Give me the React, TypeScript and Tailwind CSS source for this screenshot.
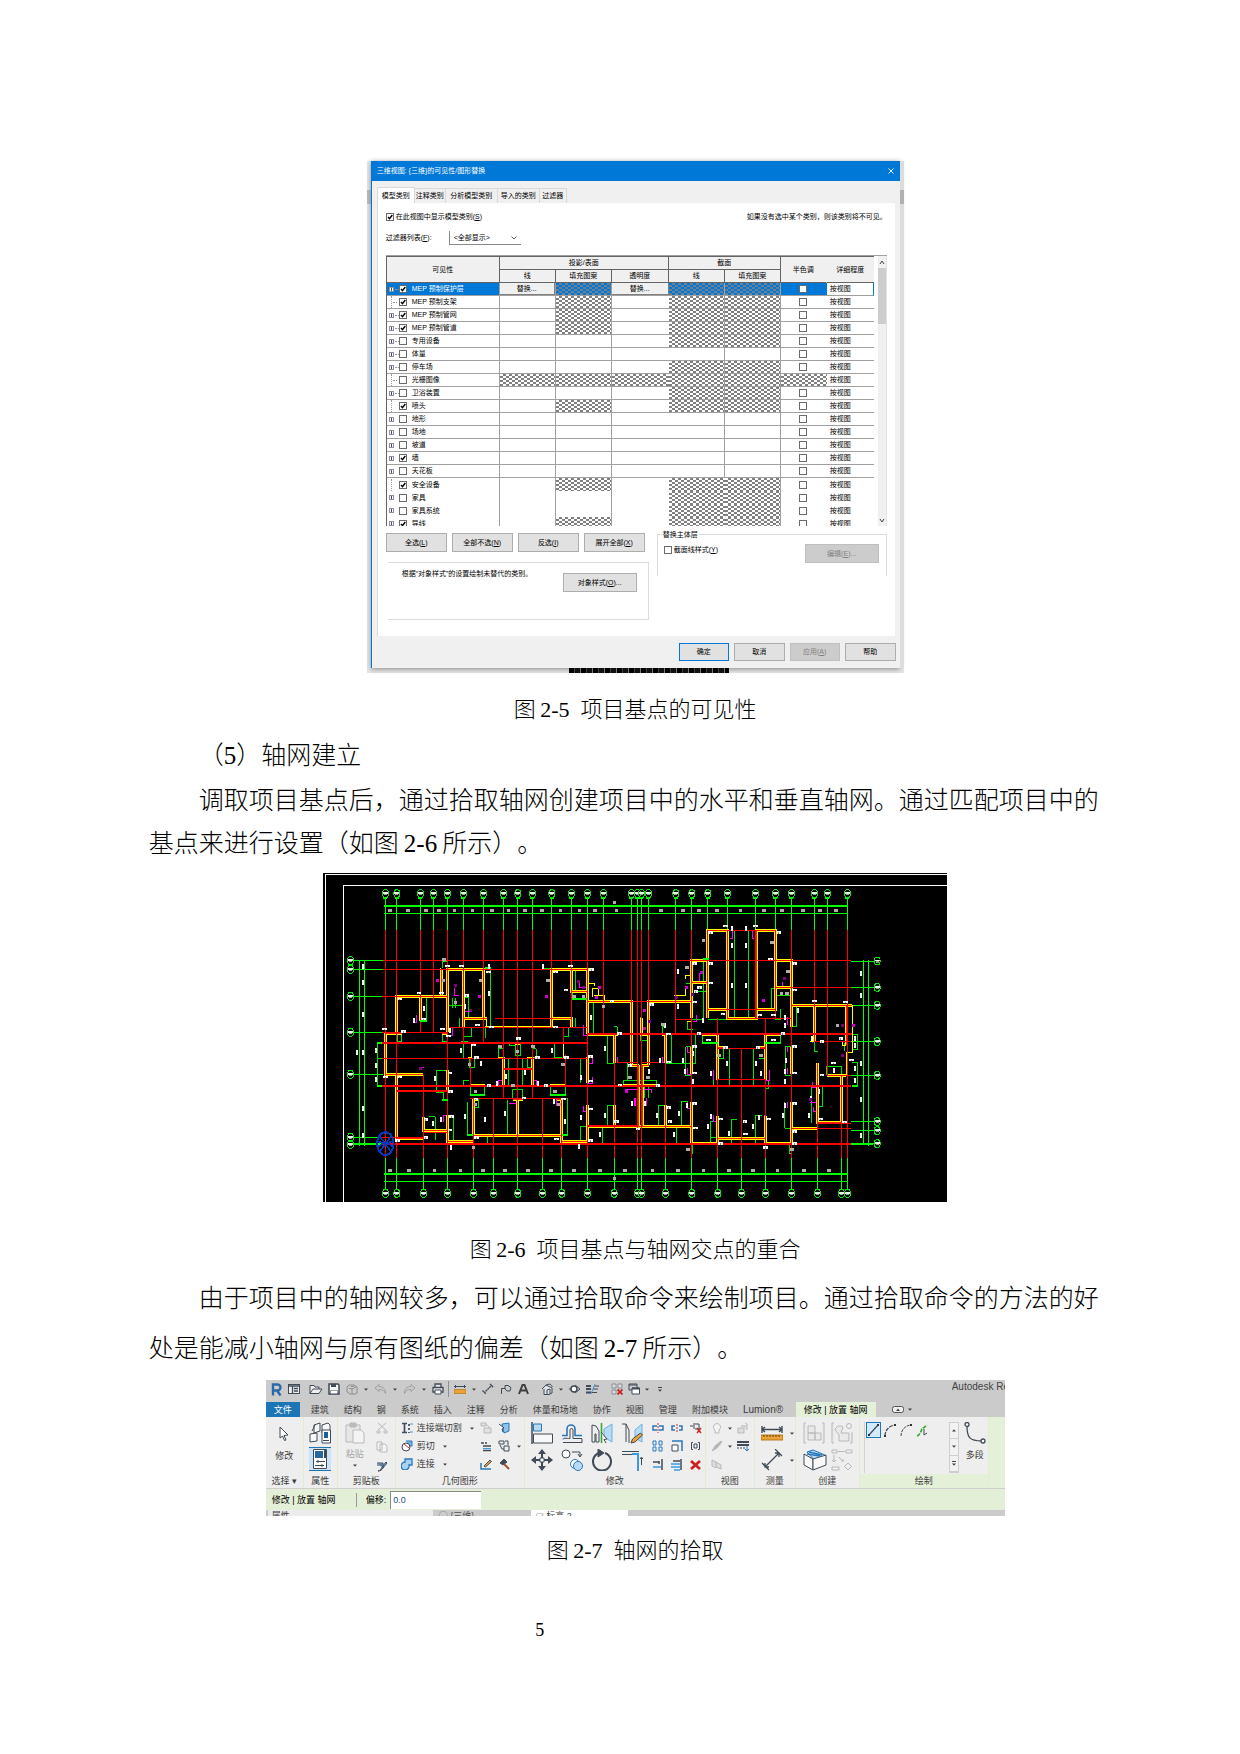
import React from "react";

const UI = "font-['Liberation_Sans','Noto_Sans_CJK_SC',sans-serif]";
const HATCH =
  "bg-[conic-gradient(#808080_25%,#ffffff_0_50%,#808080_0_75%,#ffffff_0)] bg-[length:6px_4px]";
const HATCH_SELECTED =
  "bg-[conic-gradient(#6d7f90_25%,#0078d7_0_50%,#6d7f90_0_75%,#0078d7_0)] bg-[length:6px_4px]";

/* ---------------- Visibility dialog ---------------- */

type Category = {
  name: string;
  checked?: boolean;
  leaf?: boolean;
  proj?: boolean;
  cut?: boolean;
  all?: boolean;
};

const categories: Category[] = [
  { name: "MEP 预制保护层", checked: true, proj: true, cut: true },
  { name: "MEP 预制支架", checked: true, leaf: true, proj: true, cut: true },
  { name: "MEP 预制管网", checked: true, proj: true, cut: true },
  { name: "MEP 预制管道", checked: true, proj: true, cut: true },
  { name: "专用设备", cut: true },
  { name: "体量" },
  { name: "停车场", cut: true },
  { name: "光栅图像", leaf: true, proj: true, cut: true, all: true },
  { name: "卫浴装置", cut: true },
  { name: "喷头", checked: true, leaf: true, proj: true, cut: true },
  { name: "地形" },
  { name: "场地" },
  { name: "坡道" },
  { name: "墙", checked: true },
  { name: "天花板" },
  { name: "安全设备", checked: true, leaf: true, proj: true, cut: true },
  { name: "家具", cut: true },
  { name: "家具系统", cut: true },
  { name: "导线", checked: true, proj: true, cut: true },
];

function Tick({ checked, label, className = "" }: { checked?: boolean; label: string; className?: string }) {
  return (
    <span className={`relative inline-flex size-2 shrink-0 ${className}`}>
      <input
        type="checkbox"
        defaultChecked={checked}
        aria-label={label}
        className="peer size-2 appearance-none border border-[#6b6b6b] bg-white"
      />
      <svg viewBox="0 0 8 8" className="pointer-events-none absolute inset-0 hidden size-2 peer-checked:block">
        <path d="M2 4l1.5 1.7L6.3 2" fill="none" stroke="#000" strokeWidth="1.4" />
      </svg>
    </span>
  );
}

function CategoryRow({ c, i }: { c: Category; i: number }) {
  const sel = i === 0;
  const line = i < 15 ? "border-b border-b-[#a0a0a0]" : "";
  const right = "border-r border-r-[#a0a0a0]";
  const hatch = sel ? HATCH_SELECTED : HATCH;
  const replace = (
    <button className="block h-3 w-full border-r border-b border-[#808080] bg-[#f0f0f0] text-center leading-[11px] text-black">
      替换...
    </button>
  );
  return (
    <tr className="h-[13px]">
      <td className={`${line} ${right} p-0 ${sel ? "bg-[#0078d7] text-white" : ""}`}>
        <div className="flex h-3 items-center pl-[2px] whitespace-nowrap">
          <span className="flex w-[10px] items-center">
            {c.leaf ? (
              <span className="ml-[2px] h-3 border-l border-dotted border-[#999]" />
            ) : (
              <span className="flex size-[5px] items-center justify-center border border-[#919191] bg-white">
                <span className="h-[3px] w-px bg-[#33518f]" />
              </span>
            )}
            {i < 9 && <span className="ml-px w-1 border-t border-dotted border-[#999]" />}
          </span>
          <Tick checked={c.checked} label={c.name} />
          <span className="ml-[5px] leading-3">{c.name}</span>
        </div>
      </td>
      <td className={`${line} ${right} p-0 ${c.all ? hatch : ""}`}>{sel && replace}</td>
      <td className={`${line} ${right} p-0 ${c.proj ? hatch : ""}`} />
      <td className={`${line} p-0 ${c.all ? hatch : ""}`}>{sel && replace}</td>
      <td className={`${line} p-0 ${c.cut ? hatch : ""} ${i < 15 ? right : ""}`} />
      <td className={`${line} ${right} p-0 ${c.cut ? hatch : ""}`} />
      <td className={`${line} p-0 ${sel ? "bg-[#0078d7]" : ""} ${c.all ? hatch : ""}`}>
        {!c.all && (
          <div className="flex h-3 items-center justify-center pr-[2px]">
            <Tick label={`${c.name} 半色调`} />
          </div>
        )}
      </td>
      <td className={`${line} p-0 pl-[3px] leading-3 ${sel ? "border-r border-r-[#0078d7]" : ""}`}>按视图</td>
    </tr>
  );
}

const PLAIN = "border-[#adadad] bg-[#e1e1e1]";
const DEFAULT = "border-[#0078d7] bg-[#e1e1e1]";
const DISABLED = "border-[#bfbfbf] bg-[#cccccc] text-[#838383]";

function DialogButton({
  children,
  tone = PLAIN,
  className = "",
}: {
  children: React.ReactNode;
  tone?: string;
  className?: string;
}) {
  return <button className={`border text-center whitespace-nowrap ${tone} ${className}`}>{children}</button>;
}

function Dialog() {
  const head = "border-r border-b border-[#646464] bg-[#f0f0f0] p-0 text-center font-normal leading-3";
  return (
    <div className={`w-full max-w-[537px] ${UI} text-[7px] leading-3 text-black`}>
      <div className="flex bg-[#f2f2f2]">
        <div className="w-1 bg-[#e9e9e9] pt-[29px]">
          <div className="h-[14px] bg-[#bdbdbd]" />
        </div>
        <div className="min-w-0 flex-1 border-l border-[#0078d7] bg-[#f0f0f0] shadow-[0_1px_5px_#888]">
          <div className="flex h-5 items-center justify-between bg-[#0078d7] pr-[6px] pl-[5px] text-white">
            <span>三维视图: {"{三维}"}的可见性/图形替换</span>
            <button aria-label="关闭">
              <svg viewBox="0 0 6 6" className="size-[6px]">
                <path d="M.5.5l5 5M5.500.5l-5 5" stroke="#fff" strokeWidth=".9" />
              </svg>
            </button>
          </div>
          <div className="px-[5px] pt-[6px]">
            <div className="flex h-4 items-end" role="tablist">
              <button role="tab" className="h-4 w-[38px] border-x border-t border-[#d9d9d9] bg-white whitespace-nowrap">
                模型类别
              </button>
              {[
                ["注释类别", "w-[31px]"],
                ["分析模型类别", "w-[52px]"],
                ["导入的类别", "w-[42px]"],
                ["过滤器", "w-[27px]"],
              ].map(([t, w]) => (
                <button
                  key={t}
                  role="tab"
                  className={`h-[15px] border-t border-r border-[#d9d9d9] bg-[#f0f0f0] whitespace-nowrap ${w}`}
                >
                  {t}
                </button>
              ))}
            </div>
            <div className="h-[433px] border-l border-[#dcdcdc] bg-white pt-2 pr-2 pl-2">
              <div className="flex items-center justify-between">
                <label className="flex items-center gap-[2px]">
                  <Tick checked label="在此视图中显示模型类别" />
                  <span>
                    在此视图中显示模型类别(<u>S</u>)
                  </span>
                </label>
                <span>如果没有选中某个类别，则该类别将不可见。</span>
              </div>
              <div className="mt-[7px] flex h-4 items-center">
                <label htmlFor="filter" className="w-[63px]">
                  过滤器列表(<u>F</u>):
                </label>
                <div className="relative w-[72px]">
                  <select
                    id="filter"
                    className="block h-[14px] w-full appearance-none border-b border-l border-[#8a8a8a] bg-white pl-1"
                  >
                    <option>&lt;全部显示&gt;</option>
                  </select>
                  <svg viewBox="0 0 6 4" className="pointer-events-none absolute top-[5px] right-1 h-1 w-[6px]">
                    <path d="M.5.5L3 3 5.500.5" fill="none" stroke="#333" strokeWidth=".8" />
                  </svg>
                </div>
              </div>
              <div className="mt-[9px] flex h-[271px] overflow-hidden border-t border-[#a0a0a0]">
                <div className="min-w-0 flex-1">
                  <table className="w-full table-fixed border-separate border-spacing-0 border-t border-l border-[#646464]">
                    <colgroup>
                      <col className="w-[113px]" />
                      <col className="w-[56px]" />
                      <col className="w-[56px]" />
                      <col className="w-[57px]" />
                      <col className="w-[56px]" />
                      <col className="w-[56px]" />
                      <col className="w-[46px]" />
                      <col />
                    </colgroup>
                    <thead>
                      <tr className="h-[13px]">
                        <th rowSpan={2} className={head}>可见性</th>
                        <th colSpan={3} className={head}>投影/表面</th>
                        <th colSpan={2} className={head}>截面</th>
                        <th rowSpan={2} className={`${head} border-r-[#f0f0f0]`}>半色调</th>
                        <th rowSpan={2} className={`${head} border-r-0`}>详细程度</th>
                      </tr>
                      <tr className="h-[13px]">
                        <th className={head}>线</th>
                        <th className={head}>填充图案</th>
                        <th className={head}>透明度</th>
                        <th className={head}>线</th>
                        <th className={head}>填充图案</th>
                      </tr>
                    </thead>
                    <tbody>
                      {categories.map((c, i) => (
                        <CategoryRow key={c.name} c={c} i={i} />
                      ))}
                    </tbody>
                  </table>
                </div>
                <div className="ml-1 flex w-[9px] flex-col items-center justify-between border-r border-[#e3e3e3] bg-[#f0f0f0]">
                  <svg viewBox="0 0 8 12" className="h-3 w-2">
                    <path d="M2 8l2-3 2 3" fill="none" stroke="#444" />
                  </svg>
                  <div className="mb-auto h-14 w-2 bg-[#cdcdcd]" />
                  <svg viewBox="0 0 8 10" className="h-[10px] w-2">
                    <path d="M2 3l2 3 2-3" fill="none" stroke="#444" />
                  </svg>
                </div>
              </div>
              <div className="mt-[7px] flex">
                <div className="w-[263px]">
                  <div className="flex gap-[5px]">
                    <DialogButton className="h-[19px] w-[61px]">全选(<u>L</u>)</DialogButton>
                    <DialogButton className="h-[19px] w-[61px]">全部不选(<u>N</u>)</DialogButton>
                    <DialogButton className="h-[19px] w-[61px]">反选(<u>I</u>)</DialogButton>
                    <DialogButton className="h-[19px] w-[61px]">展开全部(<u>X</u>)</DialogButton>
                  </div>
                  <div className="mt-[10px] ml-[2px] flex h-[58px] justify-between border-y border-r border-[#dcdcdc] pt-[5px] pr-[11px] pl-[14px]">
                    <span>根据“对象样式”的设置绘制未替代的类别。</span>
                    <DialogButton className="mt-[5px] h-[19px] w-[74px]">对象样式(<u>O</u>)...</DialogButton>
                  </div>
                </div>
                <fieldset className="relative mt-px ml-2 h-[42px] min-w-0 flex-1 border-x border-t border-[#dcdcdc]">
                  <legend className="ml-1 h-0 px-px leading-[0px]">替换主体层</legend>
                  <div className="flex justify-between pt-[9px] pr-[7px] pl-[6px]">
                    <label className="flex h-3 items-center gap-[2px]">
                      <Tick label="截面线样式" />
                      <span>
                        截面线样式(<u>Y</u>)
                      </span>
                    </label>
                    <DialogButton tone={DISABLED} className="h-[19px] w-[74px]">
                      编辑(<u>E</u>)...
                    </DialogButton>
                  </div>
                </fieldset>
              </div>
            </div>
          </div>
          <div className="flex h-8 justify-end gap-[5px] pt-[7px] pr-1">
            <DialogButton tone={DEFAULT} className="h-[18px] w-[50px]">确定</DialogButton>
            <DialogButton className="h-[18px] w-[51px]">取消</DialogButton>
            <DialogButton tone={DISABLED} className="h-[18px] w-[50px]">
              应用(<u>A</u>)
            </DialogButton>
            <DialogButton className="h-[18px] w-[51px]">帮助</DialogButton>
          </div>
        </div>
        <div className="w-1 bg-[#dcdcdc] pt-[29px]">
          <div className="h-[14px] bg-[#b0b0b0]" />
        </div>
      </div>
      <div className="flex h-[5px] justify-center bg-[#e6e6e6] pl-[28px]">
        <div className="w-[160px] bg-[repeating-linear-gradient(90deg,#000_0_5px,#444_5px_6px,#111_6px_11px,#777_11px_12px)]" />
      </div>
    </div>
  );
}

/* ---------------- Floor plan ---------------- */

const topAxes: [number, number][] = [
  [196, 880], [230, 880], [301, 502], [340, 502], [382, 880], [430, 530], [490, 530], [550, 700],
  [593, 880], [637, 700], [695, 490], [754, 490], [802, 880], [850, 505], [934, 600], [952, 880],
  [964, 880], [985, 600], [1067, 505], [1115, 880], [1163, 460], [1222, 460], [1306, 460], [1366, 460],
  [1414, 880], [1483, 530], [1522, 630], [1582, 880],
];
const bottomAxes: [number, number][] = [
  [196, 836], [230, 836], [310, 630], [382, 836], [460, 700], [520, 700], [593, 836], [667, 700],
  [725, 700], [802, 836], [882, 507], [952, 836], [964, 836], [1036, 507], [1115, 836], [1193, 460],
  [1264, 550], [1336, 460], [1414, 836], [1492, 600], [1564, 630], [1582, 836],
];
const leftAxes = [287, 313, 394, 502, 628, 817, 838];
const rightAxes = [288, 367, 421, 530, 631, 770, 797, 836];

const WALLS =
  "M230 504V394H382M301 394V468M196 504H245M196 504V628H310M230 628V820H310M310 755V796H382M382 750V830H460" +
  "M382 502V312H490V462M430 312V487M430 460H500M364 312V390M365 504H382M382 615V682M460 810V702H475M460 810H725V702H712M725 810V830H802" +
  "M593 700V810M580 702H608M695 487V312H802V507M754 312V380H802M695 460H754V487M802 409H934V600H958M802 507H893M802 575V655" +
  "M802 720V830M802 783H1115M882 507V595M882 720V780M955 600V783M966 600V783M985 600V409H1115M1115 460V286H1163M910 662H1008" +
  "M450 662H495M690 662H735M550 577V660M637 577V660M585 534H600M963 460V507H985M966 600H988M1025 507H1036V595M1036 720V780" +
  "M1115 352H1163M1163 460V196H1222V460H1308V196H1366V433H1306M1163 433H1222M1366 286H1414V485M1366 367H1414M1366 196V433" +
  "M1414 422H1596M1483 422V530M1578 422V540M1147 507H1193V645M1193 548H1210M1336 645V507H1382M1320 548H1336M1115 545V628" +
  "M1414 545V628M1115 710V836H1193V752M1193 819H1336M1336 752V836H1414V790H1492M1414 710V790M1492 595V772H1564V630M1520 630H1578";

const THIN_YELLOW =
  "M495 484H690M498 460V484M690 460V484M455 530V578H445M729 530V578H740M550 577H535M637 577H622M1596 420V562H1578V630M802 355H823V364" +
  "M823 391H853V409M818 397V370H835V391M1115 332H1097V341M1062 391H1096V370M360 310V385M1100 470H1115M1470 530H1495M1568 530V540H1578";

const RED_THICK = "M187 534H802M802 507H1595M187 662H1593M187 836H1593M230 677H382M550 611H637M802 783H952";
const RED_THIN =
  "M190 286H1593M190 313H805M187 394H385M187 502H382M187 580H802M450 700H742M187 817H310M310 801H382M525 460H700M390 487H802" +
  "M802 409H1115M890 592H952M964 592H1020M1366 367H1593M1414 421H1593M1483 529H1593M1522 631H1593M1492 775H1593M1414 790H1593" +
  "M1193 550H1336M1193 643H1336M1163 433H1366M1067 463H1115M1222 460H1415M1222 196H1306M451 578V660M736 570V660M730 488V535M310 630V660";

const GREEN =
  "M366 310V288H382V310M512 310V485M320 394V468H301M382 355V421H430M397 400V428M406 400V428M430 397H445V460M418 460V487H430M430 487V514H455V487" +
  "M495 487V520M745 487V514H733M766 460V487M672 310H690V320M766 316V380M757 380V403H800M820 415V505M850 409V433M862 507V595H882M892 485V510M883 485H892" +
  "M232 508V528H245V508M367 508V528H382M187 534H173V662H187M173 580H187M349 615V682H370V705H385M349 615H382M400 750V836M346 755V825M328 755H346" +
  "M430 530V578M424 530H445M430 662V645H448M449 580V607H463V580M702 530V578H725M535 551V577M535 551H550M649 551V577H637M649 551H637M586 534V570H600V534" +
  "M568 530V542H586M565 580V660M607 580V660M622 580V607H637M452 665V690H494V665M690 665V690H737V665M578 700V672H608V700M442 710V810H460M475 702V728H460" +
  "M562 705V810M743 700V810H725M725 700H743M502 810V835M781 783H802M781 655V580H802M862 780V720H882M847 783V838M923 592V645M910 662V645H952M781 783V840" +
  "M1151 286V463H1115M1097 355H1115M1123 380H1163M1151 365V380M1243 196V460M1285 196V460M1225 196H1243M1285 196H1303M1353 430V370H1366M1366 380V391H1414" +
  "M1220 430V463H1165M1430 485V420M1414 485H1430M1380 433V463H1366M1125 507V595H1036M1054 507V595M1028 507V485H1036M1147 510V534H1193M1336 534H1382V510" +
  "M1097 545V630H1115M1097 545H1115M1396 545V630H1414M1396 545H1414M1228 550V665M1300 550V665M1210 548V580H1193M1318 580H1336M1336 645V670H1345V645" +
  "M1180 645V665H1195M1016 780V720H1036M1084 780V710H1105M1069 780V838M1171 836V770H1193M1171 817H1193M1234 836V763H1252M1306 836V752H1325M1394 710V790" +
  "M1394 790H1414M1475 775V665H1508V723H1492M1520 630V604H1565V630M1597 507H1613V552H1597M1597 592H1613V662H1595M1484 530V558H1495M1574 535V558" +
  "M1118 838V865H1112M1408 840V865H1417M961 457V525H985M985 645H1008V662M946 645H985M985 662V700M973 665V700M1102 470V492H1118";

const GREEN_THICK =
  "M193 123H1582M193 927H1582M495 310H512M450 690H494M690 690H737M1147 534H1193M1336 534H1382M100 836H187M1593 836H1660M365 705H385M172 534H187M172 662H187M1597 662H1613M755 403H800M440 810H460M725 810H743M300 468H320M1150 282H1167";

const MAGENTA =
  "M403 370V391H418M430 391V460M430 440H452M382 355V380M290 450V472H280M397 487V510H385M300 608H312M778 345V367H790M778 367H802M790 480V510H802M817 575V595H805" +
  "M817 635V655H805M535 660V645H545M649 660V645H640M568 716H590M370 770V750H380M709 700V722M790 722V738H802M892 575V595M946 700V723M916 680V672H955" +
  "M1138 325V353M1123 353H1150M1237 196V220H1230M1297 196V220H1303M1388 350V367H1366M1366 370V432M1130 450V468H1118M1403 455V480M1028 575V592H1036" +
  "M1477 515V535M1103 545V562H1115M1103 610V628H1115M1180 615V645M1348 615V645H1336M1403 545V562M1403 610V628M1103 710V730H1115M1181 750V770H1193" +
  "M1333 750V770M1403 710V730M1490 668V712H1470M1478 650V668H1490M1480 725V740H1492M935 672H995V685M942 700V722M978 700V722M963 672V700";

/* Small annotation labels: wide ones carry text, tall ones are rotated dimensions. */
const wideLabels: [number, number][] = [
  [297, 385], [365, 385], [240, 403], [193, 493], [250, 500], [367, 493], [382, 303], [424, 303], [505, 322], [439, 392],
  [310, 462], [385, 513], [472, 481], [515, 487], [460, 540], [470, 578], [652, 578], [595, 521], [738, 376], [706, 322],
  [752, 303], [814, 314], [706, 487], [898, 506], [740, 578], [197, 637], [240, 637], [390, 625], [392, 680], [318, 764],
  [318, 818], [232, 827], [390, 796], [395, 755], [468, 702], [612, 700], [710, 823], [470, 818], [812, 827], [812, 575],
  [507, 662], [678, 662], [900, 661], [890, 770], [812, 732], [876, 408], [930, 602], [954, 792], [730, 702], [812, 648],
  [1216, 184], [1306, 184], [1172, 203], [1377, 203], [1124, 296], [1172, 296], [1351, 282], [1424, 296], [1172, 354],
  [1424, 376], [1124, 412], [995, 419], [1484, 408], [1576, 412], [1137, 506], [1389, 506], [1217, 548], [1314, 548],
  [1045, 508], [1045, 592], [1563, 521], [1506, 530], [1506, 631], [1540, 594], [1166, 525], [1360, 525], [1124, 545],
  [1424, 545], [1124, 625], [1424, 625], [1014, 662], [1045, 728], [1050, 770], [1124, 716], [1424, 716], [1126, 790],
  [1202, 762], [1346, 762], [1275, 770], [1277, 808], [1202, 836], [1336, 848], [1424, 836], [1424, 800], [1502, 763],
  [1573, 772], [1595, 586], [1361, 451], [1318, 451], [1209, 447], [1138, 368], [1128, 380],
];
const tallLabels: [number, number][] = [
  [129, 303], [129, 353], [129, 447], [112, 562], [129, 562], [129, 730], [129, 810], [168, 556], [168, 601], [168, 644],
  [313, 430], [506, 385], [508, 303], [669, 303], [282, 465], [390, 497], [435, 423], [813, 457], [856, 550], [424, 556],
  [697, 556], [484, 596], [559, 634], [614, 622], [346, 640], [338, 776], [364, 764], [393, 846], [436, 755], [496, 764],
  [556, 746], [736, 770], [784, 757], [784, 637], [856, 750], [840, 808], [776, 845], [530, 656], [655, 656], [702, 710],
  [1236, 241], [1277, 241], [1236, 361], [1277, 361], [1236, 190], [1277, 190], [1074, 319], [1074, 425], [1149, 465],
  [1434, 437], [1395, 457], [1395, 480], [1118, 565], [1090, 586], [1096, 620], [1118, 650], [1221, 595], [1309, 595],
  [1397, 586], [1396, 620], [1396, 648], [1173, 625], [1322, 625], [1497, 680], [1467, 750], [1474, 700], [1605, 520],
  [1605, 541], [1605, 610], [1605, 645], [1623, 325], [1623, 391], [1623, 595], [1623, 703], [1623, 811], [1011, 750],
  [1078, 746], [1062, 808], [1165, 785], [1228, 805], [1299, 785], [1388, 750], [1395, 720], [1173, 755], [1316, 757],
  [1477, 520], [1541, 615], [1035, 480], [986, 620], [1019, 585], [936, 715], [975, 715], [1101, 720],
];
const grayLabels: [number, number][] = [
  [210, 136], [264, 136], [318, 136], [357, 136], [403, 136], [457, 136], [516, 136], [565, 136], [615, 136], [665, 136],
  [721, 136], [778, 136], [824, 136], [889, 136], [1023, 136], [1089, 136], [1137, 136], [1191, 136], [1261, 136], [1332, 136],
  [1386, 136], [1449, 136], [1500, 136], [1548, 136], [883, 112], [883, 940], [210, 916], [267, 916], [343, 916], [421, 916],
  [489, 916], [555, 916], [624, 916], [693, 916], [762, 916], [840, 916], [915, 916], [997, 916], [1074, 916], [1150, 916],
  [1227, 916], [1299, 916], [1372, 916], [1452, 916], [1527, 916], [372, 282], [370, 346], [406, 412], [481, 346], [684, 346],
  [762, 395], [790, 395], [850, 424], [592, 560], [540, 545], [638, 545], [448, 598], [728, 598], [466, 680], [704, 680],
  [578, 662], [460, 848], [466, 718], [716, 718], [1028, 478], [1150, 225], [1356, 232], [1100, 308], [1404, 320],
  [1384, 386], [1400, 386], [1552, 480], [930, 636], [984, 636], [1196, 572], [1322, 572], [1104, 854], [1416, 854],
];
const purpleMarks: [number, number][] = [
  [351, 346], [407, 362], [478, 393], [451, 436], [680, 395], [775, 349], [838, 368], [790, 368], [828, 397], [302, 610],
  [1144, 321], [1393, 339], [1330, 405], [1567, 481], [1600, 481], [1567, 571], [972, 437], [989, 470], [972, 490],
  [1470, 702], [920, 680], [1117, 388], [1098, 366], [1070, 397],
];

function Bubble({ x, y }: { x: number; y: number }) {
  return (
    <g>
      <ellipse cx={x + 0.5} cy={y} rx="9" ry="12" stroke="#00ee00" strokeWidth="3" />
      <rect x={x - 7} y={y - 4} width="15" height="5" fill="#f0f0f0" />
      <rect x={x - 4} y={y + 1} width="9" height="4" fill="#9a9a9a" />
    </g>
  );
}

function FloorPlan() {
  return (
    <svg
      viewBox="9 24 1872 987"
      role="img"
      aria-label="项目轴网平面图"
      className="block w-full max-w-[624px] bg-black"
      shapeRendering="crispEdges"
      fill="none"
    >
      <path d="M1881 28H17V1011M1881 62H71V1011" stroke="#fff" strokeWidth="3" />
      <g stroke="#00ff00" strokeWidth="3">
        {topAxes.map(([x]) => (
          <path key={x} d={`M${x} 98V195`} />
        ))}
        {bottomAxes.map(([x]) => (
          <path key={x} d={`M${x} 880V974`} />
        ))}
        {leftAxes.map((y) => (
          <path key={y} d={`M100 ${y}H190`} />
        ))}
        {rightAxes.map((y) => (
          <path key={y} d={`M1593 ${y}H1663`} />
        ))}
        <path d="M118 286V842M133 286V842M1630 286V840M1645 286V842M193 145H1582M193 949H1582" />
      </g>
      <path d={GREEN} stroke="#00e400" strokeWidth="3" />
      <path d={MAGENTA} stroke="#ff00ff" strokeWidth="3" />
      <path d={THIN_YELLOW} stroke="#ffff00" strokeWidth="3" />
      <path d={WALLS} stroke="#ffff00" strokeWidth="9" />
      <path d={WALLS} stroke="#ff2000" strokeWidth="3" />
      <g stroke="#ff0000" strokeWidth="3">
        {topAxes.map(([x, end]) => (
          <path key={x} d={`M${x} 195V${end}`} />
        ))}
        {bottomAxes.map(([x, start]) => (
          <path key={x} d={`M${x} ${start}V880`} />
        ))}
        <path d={RED_THIN} />
      </g>
      <path d={RED_THICK} stroke="#ff0000" strokeWidth="6" />
      <path d={GREEN_THICK} stroke="#00ff00" strokeWidth="6" />
      {wideLabels.map(([x, y], i) => (
        <g key={i}>
          <rect x={x - 7} y={y - 4} width="14" height="7" fill="#fff" />
          <rect x={x - 2} y={y - 1} width="3" height="4" fill="#888" />
        </g>
      ))}
      {tallLabels.map(([x, y], i) => (
        <g key={i}>
          <rect x={x - 3} y={y - 7} width="6" height="15" fill="#fff" />
          <rect x={x - 3} y={y - 1} width="3" height="3" fill="#ccc" />
        </g>
      ))}
      {grayLabels.map(([x, y], i) => (
        <rect key={i} x={x - 5} y={y - 4} width="11" height="9" fill="#b0aea4" />
      ))}
      {purpleMarks.map(([x, y], i) => (
        <rect key={i} x={x - 4} y={y - 4} width="9" height="9" fill={i % 2 ? "#800080" : "#d000d0"} />
      ))}
      {topAxes.map(([x]) => (
        <g key={x}>
          <rect x={x - 6} y="96" width="12" height="6" fill="#00ff00" />
          <Bubble x={x} y={86} />
        </g>
      ))}
      {bottomAxes.map(([x]) => (
        <Bubble key={x} x={x} y={985} />
      ))}
      {leftAxes.map((y) => (
        <Bubble key={y} x={91} y={y} />
      ))}
      {rightAxes.map((y) => (
        <Bubble key={y} x={1671} y={y} />
      ))}
      <g stroke="#0038c0" strokeWidth="6">
        <ellipse cx="196" cy="836" rx="25" ry="34" />
        <path d="M178 812L214 862M214 812L178 862M172 828L190 834L172 846M220 828L202 834L220 846" strokeWidth="5" />
      </g>
    </svg>
  );
}

/* ---------------- Ribbon ---------------- */

function Ico({
  label,
  w = 12,
  h = 12,
  className = "h-3 w-3",
  children,
}: {
  label: string;
  w?: number;
  h?: number;
  className?: string;
  children: React.ReactNode;
}) {
  return (
    <button aria-label={label} className="block shrink-0">
      <svg viewBox={`0 0 ${w} ${h}`} className={`block ${className}`} fill="none" stroke="#414b57">
        {children}
      </svg>
    </button>
  );
}

function Caret({ className = "" }: { className?: string }) {
  return (
    <svg viewBox="0 0 4 3" className={`h-[3px] w-1 shrink-0 ${className}`}>
      <path d="M0 .5h4L2 2.800z" fill="#444" />
    </svg>
  );
}

const L = "h-[22px] w-[22px]";

function QuickAccess() {
  return (
    <div className="mb-1 flex h-[18px] items-center pl-[5px]">
      <Ico label="Revit" className="h-[13px] w-[11px]" w={11} h={13}>
        <path d="M2 12.500V1.500h4.500a3 3 0 010 6H3M6 7.500l3.500 5" stroke="#2b6aa8" strokeWidth="2.400" />
      </Ico>
      <div className="ml-[6px]">
        <Ico label="主页">
          <rect x=".5" y="1.500" width="11" height="9" fill="#eee" />
          <path d="M.5 3h11M4.500 3v7.500M6 5.500h4M6 8h4" strokeWidth="1.300" />
        </Ico>
      </div>
      <div className="ml-[9px]">
        <Ico label="打开" w={14} className="h-3 w-[14px]">
          <path d="M1 10.500V2.500h4l1 1.500h4v2M1 10.500l3-4.500h9l-3 4.500z" fill="#eee" />
        </Ico>
      </div>
      <div className="ml-[5px]">
        <Ico label="保存">
          <path d="M1 1h9l1 1v9H1z" fill="#f5f5f5" strokeWidth="1.500" />
          <path d="M3 1h5v3H3zM2.500 7h7v4h-7z" fill="#414b57" stroke="none" />
          <path d="M3 7.500h6v3H3z" fill="#fff" stroke="none" />
        </Ico>
      </div>
      <div className="ml-[6px] flex items-center gap-[6px]">
        <Ico label="同步">
          <path d="M3 2h5l3 2v6l-2 1H4L1 9V4zM3 5l3 1 4-2M6 6v5M5 3.500h3" stroke="#8e8e8e" />
        </Ico>
        <Caret />
        <Ico label="放弃" w={13} className="h-3 w-[13px]">
          <path d="M5 1.500L1 5l4 3.500v-2c4 0 5 1 6.500 4 0-4-2-7-6.500-7z" stroke="#a0a0a0" />
        </Ico>
        <Caret />
        <Ico label="重做" w={13} className="h-3 w-[13px]">
          <path d="M8 1.500L12 5 8 8.500v-2c-4 0-5 1-6.500 4 0-4 2-7 6.500-7z" stroke="#a0a0a0" />
        </Ico>
        <Caret />
        <Ico label="打印">
          <path d="M3 4V1h6v3M1 4.500h10V9H1z" fill="#e8e8e8" strokeWidth="1.300" />
          <path d="M3 7h6v4H3z" fill="#fff" />
        </Ico>
      </div>
      <div className="ml-1 h-4 border-l border-[#8e8e8e]" />
      <div className="ml-[5px] flex items-center gap-[6px]">
        <Ico label="测量" >
          <path d="M0 3.500h12M1.500 2v3M10.500 2v3" />
          <path d="M0 6.500h12v4H0z" fill="#eaa13a" stroke="#b06a00" strokeWidth=".6" />
        </Ico>
        <Caret />
        <Ico label="对齐尺寸标注">
          <path d="M2 10L10 2M.5 7.500L4 11M8 1l3.500 3.500" strokeDasharray="2 .5" strokeWidth="1.300" />
        </Ico>
        <Ico label="按类别标记">
          <path d="M1.500 11V5.500H5M5 2.500h3l3 2-1 3.500H7L5 6z" />
        </Ico>
        <Ico label="文字" w={11} className="h-3 w-[11px]">
          <path d="M1 11L4.500 2h2L10 11M3 7.500h5" stroke="#3f3f3f" strokeWidth="2" />
        </Ico>
      </div>
      <div className="ml-3 flex items-center gap-[6px]">
        <Ico label="默认三维视图">
          <path d="M1 6l4-4 6 3v5l-3 1.500H3V6M6 11V7l3-1v5M5 2l4-1 2.500 3" fill="#dfe3e6" />
        </Ico>
        <Caret />
        <Ico label="剖面" w={11} className="h-3 w-[11px]">
          <circle cx="5" cy="6" r="3" fill="#fff" strokeWidth="1.500" />
          <path d="M6 2l5 4-5 4M0 6h2" />
        </Ico>
        <Ico label="细线" w={13} className="h-3 w-[13px]">
          <path d="M0 3h5M0 6h5M0 9.500h5" strokeWidth="2" />
          <path d="M8 3h5M7 6h5M6 9.500h5" />
          <path d="M5 11l4-10" stroke="#3b9ae0" />
        </Ico>
      </div>
      <div className="ml-3 flex items-center gap-[5px]">
        <Ico label="关闭隐藏窗口">
          <path d="M1 1h4v4H1zM7 1h4v4H7zM1 7h4v4H1z" stroke="#8a8f95" fill="#ddd" />
          <path d="M6.500 6.500l5 5M11.500 6.500l-5 5" stroke="#c62828" strokeWidth="1.800" />
        </Ico>
        <Ico label="切换窗口">
          <path d="M1 1h8v6H1zM1 2h8" />
          <path d="M4 5h7.500v6H4z" fill="#fff" />
          <path d="M4 5.500h7.500" strokeWidth="2" />
        </Ico>
        <Caret />
        <span className="ml-1 border-t border-[#444] pt-px">
          <Caret />
        </span>
      </div>
      <span className="ml-auto w-[53px] self-start overflow-hidden text-[10px] leading-[14px] whitespace-nowrap text-[#444]">
        Autodesk Revit
      </span>
    </div>
  );
}

function Panel({
  title,
  className,
  green,
  children,
}: {
  title: string;
  className: string;
  green?: boolean;
  children: React.ReactNode;
}) {
  return (
    <section className={`flex shrink-0 flex-col border-r border-[#e0edd2] ${className}`}>
      <div className="h-[57px] pt-[5px]">{children}</div>
      <h3 className={`h-[14px] text-center leading-[14px] whitespace-nowrap ${green ? "bg-[#e5f0d8]" : ""}`}>{title}</h3>
    </section>
  );
}

function Ribbon() {
  const tabs = ["建筑", "结构", "钢", "系统", "插入", "注释", "分析", "体量和场地", "协作", "视图", "管理", "附加模块", "Lumion®"];
  const gray = "#b9b9b9";
  return (
    <div className={`h-[136px] w-full max-w-[739px] overflow-hidden bg-[#cbcbcb] ${UI} text-[9px] leading-3 text-[#3c3c3c]`}>
      <QuickAccess />
      <nav className="flex h-[15px] items-center whitespace-nowrap">
        <button className="h-[15px] w-[34px] bg-[#1c75b4] text-white">文件</button>
        <div className="ml-[11px] flex gap-[15px]">
          {tabs.map((t) => (
            <button key={t} className={t.startsWith("L") ? "text-[10px]" : ""}>
              {t}
            </button>
          ))}
        </div>
        <button className="ml-auto h-[15px] w-20 bg-[#e5f0d8] text-black">修改 | 放置 轴网</button>
        <button aria-label="最小化" className="mr-[93px] ml-4 flex items-center gap-1">
          <svg viewBox="0 0 12 7" className="h-[7px] w-3" fill="#eee" stroke="#555">
            <rect x=".5" y=".5" width="11" height="6" rx="2" />
            <path d="M4 5l2-2.500L8 5z" fill="#444" stroke="none" />
          </svg>
          <Caret />
        </button>
      </nav>
      <div className="flex h-[71px] bg-[#eeeeee]">
        <Panel title="选择 ▾" className="w-[38px]">
          <button className="mx-auto flex flex-col items-center">
            <svg viewBox="0 0 12 16" className="mt-1 h-4 w-3" fill="#fff" stroke="#414b57">
              <path d="M2 1l8 8-4 .5 2 4.500-1.500.5-2-4.500L2 12z" />
            </svg>
            <span className="mt-2">修改</span>
          </button>
        </Panel>
        <Panel title="属性" className="w-[34px]">
          <div className="flex flex-col items-center gap-[3px]">
            <Ico label="类型属性" w={22} h={22} className={L}>
              <path d="M5 3l6-2v8l-6 2zM13 3l6-2 2 2v6l-8 2zM1 12l7-1v8l-7 1z" fill="#f8f8f8" />
              <path d="M13 8h8.500v13H13z" fill="#fff" />
              <path d="M15 10h4v6h-4z" fill="#1e5f99" stroke="none" />
              <path d="M14 18.500h6M3 9l3-6" />
            </Ico>
            <div className="border-y border-[#1c75b4] bg-[#cbe3f7] px-px">
              <Ico label="属性" w={20} h={22} className="h-[22px] w-5">
                <path d="M3.500 1.500h13v19h-13z" fill="#fff" />
                <path d="M5 3h8v7H5z" fill="#2668a0" stroke="none" />
                <path d="M15 2v8" strokeWidth="2" />
                <path d="M6 13.500h9M8 12v3M5 17.500h9M12 16v3" />
              </Ico>
            </div>
          </div>
        </Panel>
        <Panel title="剪贴板" className="w-[58px]">
          <div className="flex justify-center gap-[11px]">
            <button className="flex flex-col items-center text-[#a8a8a8]">
              <svg viewBox="0 0 20 22" className="h-[22px] w-5" fill="#e6e6e6" stroke={gray}>
                <path d="M1 3h14v17H1z" />
                <path d="M5 1h6v4H5z" fill="#bbb" />
                <path d="M8 8h8l3 3v10H8z" fill="#f4f4f4" />
              </svg>
              <span className="mt-1">粘贴</span>
              <Caret className="mt-1" />
            </button>
            <div className="flex flex-col gap-[7px]">
              <Ico label="剪切">
                <path d="M2 1l8 7M10 1L2 8M1 9h3v2H1zM8 9h3v2H8z" stroke={gray} />
              </Ico>
              <Ico label="复制">
                <path d="M1 1h5v8H1zM4 3h5l2 2v6H4z" fill="#f4f4f4" stroke={gray} />
              </Ico>
              <Ico label="匹配类型">
                <path d="M1 3h6v5M1 5h5M2 11c2 0 3-2 4-4l4-5 1 1-4 5c-1 2-3 3-5 3z" fill="#74b5e8" />
              </Ico>
            </div>
          </div>
        </Panel>
        <Panel title="几何图形" className="w-[129px]">
          <div className="flex gap-1 pl-[5px]">
            <div className="flex w-[75px] flex-col gap-[6px] whitespace-nowrap">
              <div className="flex items-center gap-1">
                <Ico label="连接端切割">
                  <path d="M1 1.500h5M1 10.500h5M3.500 2v8M8 2v2M8 6v2M8 10v1" strokeWidth="1.700" />
                  <path d="M9 2h3M9 10h3" stroke="#3b9ae0" />
                </Ico>
                连接端切割
                <Caret className="ml-1" />
              </div>
              <div className="flex items-center gap-1">
                <Ico label="剪切">
                  <path d="M5 1h6v5H8" fill="#6db4ea" stroke="#2a78b8" />
                  <circle cx="5" cy="7" r="4" fill="#fff" />
                  <path d="M3 4l5 4" stroke="#d03030" />
                </Ico>
                剪切
                <Caret className="ml-1" />
              </div>
              <div className="flex items-center gap-1">
                <Ico label="连接">
                  <path d="M4 1h7v6H8a4 4 0 11-4-3z" fill="#a6d2f3" stroke="#2a78b8" strokeWidth="1.300" />
                </Ico>
                连接
                <Caret className="ml-1" />
              </div>
            </div>
            <div className="grid grid-cols-[12px_13px_4px] items-center gap-x-[6px] gap-y-[6px]">
              <Ico label="应用连接端">
                <path d="M1 1h5v3H1zM4 6h7v5H4zM6 2l4 4" stroke={gray} fill="#e2e2e2" />
              </Ico>
              <Ico label="拆分面">
                <path d="M4 2l7-1v8l-5 2z" fill="#8cc4ee" stroke="#2a78b8" />
                <path d="M1 2l5 4-2 1 1 3" fill="#fff" />
              </Ico>
              <span />
              <Ico label="梁柱连接">
                <path d="M1 3h3M5 3h2M3 6h8M3 10.500h8" strokeWidth="1.600" />
                <path d="M3 8.500h8" stroke="#3b9ae0" />
              </Ico>
              <Ico label="墙连接">
                <path d="M1 4h5V1H1zM6 6h5v5H6zM2 5l2 4h2M7 1h3v4" />
              </Ico>
              <Caret />
              <Ico label="拆除">
                <path d="M1 5v6h10" stroke="#2a78b8" strokeWidth="1.500" />
                <path d="M4 8l6-6 1.500 1.500-6 5.500z" fill="#e8a33d" />
              </Ico>
              <Ico label="锤子">
                <path d="M2 5l4-4 3 3-4 3z" fill="#414b57" />
                <path d="M6 6l5 5" stroke="#a0522d" strokeWidth="2" />
              </Ico>
            </div>
          </div>
        </Panel>
        <Panel title="修改" className="w-[181px]">
          <div className="flex gap-[9px] pl-[6px]">
            <div className="grid grid-cols-4 gap-x-[8px] gap-y-[5px]">
              <Ico label="对齐" w={22} h={22} className={L}>
                <path d="M1 0v22" strokeWidth="1.500" />
                <path d="M2.500 2h8v7h-8z" fill="#b9dcf5" stroke="#2a78b8" />
                <path d="M2.500 12h19v9h-19z" fill="#f8f8f8" />
              </Ico>
              <Ico label="偏移" w={22} h={22} className={L}>
                <path d="M1 13.500h5V7a4 4 0 018 0v6.500h7" stroke="#2a78b8" strokeWidth="1.600" />
                <path d="M2 17.500c0-2 3-1 7-1V8a1.500 1.500 0 013 0v8.500h9M2 20.500h19V17" />
              </Ico>
              <Ico label="镜像 - 拾取轴" w={22} h={22} className={L}>
                <path d="M1 3l4 1 3 5v11H5v-8H4v8H1z" fill="#eee" />
                <path d="M10.500 1v20" stroke="#3aaa35" strokeWidth="1.600" />
                <path d="M21 2l-8 5v8l8 5z" fill="#b9dcf5" stroke="#6eb0e0" />
                <path d="M10 10l6 7-3 .5 2 3.500" fill="#fff" />
              </Ico>
              <Ico label="镜像 - 绘制轴" w={22} h={22} className={L}>
                <path d="M1 2h4l3 6v13M5 2v18" fill="#eee" />
                <path d="M21 2l-7 6v8l7 4z" fill="#b9dcf5" stroke="#6eb0e0" />
                <path d="M10 21l1.500-4 8-6 2 2-7.500 7z" fill="#eba43a" />
              </Ico>
              <Ico label="移动" w={22} h={22} className={L}>
                <path d="M11 0l4 5h-3v4h-2V5H7zM11 22l4-5h-3v-4h-2v4H7zM0 11l5-4v3h4v2H5v3zM22 11l-5-4v3h-4v2h4v3z" fill="#414b57" stroke="none" />
                <path d="M9 9h4v4H9z" fill="#fff" />
              </Ico>
              <Ico label="复制图元" w={22} h={22} className={L}>
                <circle cx="5" cy="5" r="4" fill="#fff" />
                <path d="M11 3h8v4M17 5l2 3 2-3" />
                <circle cx="14" cy="15" r="4.500" fill="#fff" stroke="#2a78b8" />
                <circle cx="17" cy="17" r="4.500" fill="#b9dcf5" stroke="#2a78b8" />
              </Ico>
              <Ico label="旋转" w={22} h={22} className={L}>
                <path d="M14 4a9 9 0 11-6 0" strokeWidth="2" />
                <path d="M7 0l6 4-6 4z" fill="#414b57" />
              </Ico>
              <Ico label="修剪/延伸为角" w={22} h={22} className={L}>
                <path d="M1 2.500h17M1 5.500h10M16.500 10v11M20.500 9v7M19 10l1.500-2L22 10" />
                <path d="M11 5h6v17" stroke="#3b9ae0" strokeWidth="2" />
              </Ico>
            </div>
            <div className="grid grid-cols-3 gap-x-[7px] gap-y-[6px]">
              <Ico label="拆分图元">
                <path d="M5 4H1v4h4M7 4h4v4H7" strokeWidth="1.500" stroke="#2a78b8" />
                <path d="M6 1v10" stroke="#d03030" strokeDasharray="2 1" />
              </Ico>
              <Ico label="用间隙拆分">
                <path d="M4 4H1v4h3M8 4h3v4H8" strokeWidth="1.500" stroke="#2a78b8" />
                <path d="M6 2v8" stroke="#d03030" strokeDasharray="2 1" />
              </Ico>
              <Ico label="解锁">
                <path d="M0 4h3M4 1v6M5 2h4v5H5" />
                <path d="M7 6l4 5M11 6l-4 5" stroke="#c62828" strokeWidth="1.500" />
              </Ico>
              <Ico label="阵列">
                <path d="M1 1h3v4H1zM7 1h3v4H7zM1 7h3v4H1zM7 7h3v4H7z" stroke="#2a78b8" fill="#e4f1fb" />
              </Ico>
              <Ico label="缩放">
                <path d="M1 1h10v10" stroke="#2a78b8" strokeWidth="1.500" />
                <path d="M1 5h6v6H1z" fill="#fff" />
              </Ico>
              <Ico label="锁定">
                <path d="M3 2.500H1.500v7H3M8 2.500h1.500v7H8M4 4h3v4H4z" />
              </Ico>
              <Ico label="修剪/延伸单个图元">
                <path d="M1 3h6M10 0v11M7 2v3" strokeWidth="1.500" />
                <path d="M1 8h8" stroke="#3b9ae0" strokeWidth="1.500" />
              </Ico>
              <Ico label="修剪/延伸多个图元">
                <path d="M10 0v11M2 2h7" strokeWidth="1.500" />
                <path d="M0 5h9M0 8h9M3 11h6" stroke="#3b9ae0" strokeWidth="1.500" />
              </Ico>
              <Ico label="删除">
                <path d="M1 2l9 8M10 2l-9 8" stroke="#d02020" strokeWidth="2.800" />
              </Ico>
            </div>
          </div>
        </Panel>
        <Panel title="视图" className="w-[49px]">
          <div className="grid grid-cols-[12px_4px_12px] items-center gap-x-[5px] gap-y-[6px] pl-[5px]">
            <Ico label="在视图中隐藏">
              <path d="M4 8a3.500 3.500 0 114 0v3H4z" stroke={gray} fill="#f4f4f4" />
            </Ico>
            <Caret />
            <Ico label="置换图元">
              <path d="M1 6h6v5H1zM4 4h6v4M8 1l3 2" stroke={gray} fill="#ddd" />
            </Ico>
            <Ico label="替换视图中的图形">
              <path d="M1 11l3-5 6-5 1 1-5 6z" fill="#b5b5b5" stroke={gray} />
            </Ico>
            <Caret />
            <Ico label="线处理">
              <path d="M0 2h12M0 5h12" strokeWidth="2" />
              <path d="M0 8h8" strokeDasharray="2 1" />
              <path d="M10 6v5M8 9l2 2 2-2" stroke="#2a78b8" />
            </Ico>
            <Ico label="选择框">
              <path d="M1 2l4 2v6L1 8zM5 4l5 3v4L5 9" stroke={gray} fill="#ddd" />
            </Ico>
          </div>
        </Panel>
        <Panel title="测量" className="w-[41px]">
          <div className="grid grid-cols-[22px_4px] items-center gap-x-[7px] gap-y-[5px] pl-[6px]">
            <Ico label="测量两个参照" w={22} h={22} className={L}>
              <path d="M1 7.500h20M1 4v7M21 4v7M4 5L1 7.500 4 10M18 5l3 2.500L18 10" strokeWidth="1.400" />
              <path d="M0 13h22v5H0z" fill="#eba43a" stroke="#a76400" strokeWidth=".8" />
              <path d="M3 13v2M6 13v2M9 13v2M12 13v2M15 13v2M18 13v2" stroke="#6b4200" />
            </Ico>
            <Caret />
            <Ico label="对齐尺寸" w={22} h={22} className={L}>
              <path d="M4 18L18 4M1 14l7 7M14 0l7 7M4 14v4h4M14 4h4v4" strokeWidth="1.300" />
            </Ico>
            <Caret />
          </div>
        </Panel>
        <Panel title="创建" className="w-[64px]">
          <div className="grid grid-cols-[24px_24px] gap-x-1 gap-y-[5px] pl-[7px]">
            <Ico label="创建零件" w={22} h={22} className={L}>
              <path d="M3 1H1v20h2M19 1h2v20h-2M5 4h7v7H5zM5 11h7v7H5zM12 11h6v7h-6z" stroke={gray} fill="#e9e9e9" />
            </Ico>
            <Ico label="创建部件" w={22} h={22} className={L}>
              <path d="M3 1H1v20h2M19 21h2V10M4 8a5 5 0 018-3l-2 6h8v8H8v-6z" stroke={gray} fill="#e9e9e9" />
              <circle cx="18" cy="4" r="2.500" stroke={gray} />
            </Ico>
            <Ico label="创建组" w={24} h={22} className="h-[22px] w-6">
              <path d="M4 3l6-2 12 5v8l-6 2z" fill="#b9dcf5" stroke="#2a78b8" />
              <path d="M1 5l9 5v11l-9-5z" fill="#f8f8f8" />
              <path d="M10 10l13-4v10l-13 5z" fill="#f8f8f8" />
              <path d="M4 5l13 2M6 3l13 3" stroke="#2a78b8" strokeWidth="1.500" />
            </Ico>
            <Ico label="创建类似实例" w={22} h={22} className={L}>
              <path d="M1 1h5v3H1zM15 1h6v3h-6zM1 18h7v3H1zM17 14l3.500 3.500L17 21l-3.500-3.500zM7 2.500h7M3 6v7l-2-2M3 13l2-2M8 8l4 5v-3" stroke={gray} fill="#eee" />
            </Ico>
          </div>
        </Panel>
        <Panel title="绘制" green className="w-[129px]">
          <div className="flex h-[51px] gap-1 pl-1">
            <div className="flex w-[95px] border-l border-[#d2d2d2]">
              <div className="flex flex-1 items-start gap-[2px] pl-px">
                <div className="border border-[#1c75b4] bg-[#d3eafb]">
                  <Ico label="线" w={13} h={14} className="h-[14px] w-[13px]">
                    <path d="M2 12L11 2" strokeWidth="1.200" />
                    <path d="M1 11h2v2H1zM10 1h2v2h-2z" fill="#333" stroke="none" />
                  </Ico>
                </div>
                <Ico label="起点-终点-半径弧" w={14} h={16} className="h-4 w-[14px]">
                  <path d="M2 14c0-6 4-10 10-11" strokeDasharray="4 1" strokeWidth="1.200" />
                  <path d="M1 13h2v2H1zM11 2h2v2h-2z" fill="#333" stroke="none" />
                </Ico>
                <Ico label="圆心-端点弧" w={14} h={16} className="h-4 w-[14px]">
                  <path d="M2 14c0-6 4-10 9-11" strokeDasharray="3 1" />
                  <path d="M11 2h2v2h-2z" fill="#333" stroke="none" />
                </Ico>
                <Ico label="拾取线" w={14} h={16} className="h-4 w-[14px]">
                  <path d="M2 14c3-1 4-5 5-7l5-4" stroke="#2eaa2a" strokeDasharray="4 1" strokeWidth="1.600" />
                  <path d="M9 7v6l3-2" />
                </Ico>
              </div>
              <div className="flex w-[10px] flex-col border border-[#cfcfcf] bg-[#f2f2f2]">
                {["上", "下", "更多"].map((t, i) => (
                  <button key={t} aria-label={t} className="flex flex-1 flex-col items-center justify-center border-b border-[#cfcfcf]">
                    {i === 2 && <span className="mb-px w-1 border-t border-[#444]" />}
                    <Caret className={i === 0 ? "rotate-180" : ""} />
                  </button>
                ))}
              </div>
            </div>
            <button className="flex w-6 flex-col items-center">
              <svg viewBox="0 0 22 22" className={L} fill="none" stroke="#414b57" strokeWidth="1.300">
                <path d="M3 4c0 11 2 15 15 15" />
                <circle cx="3" cy="2.500" r="2" fill="#fff" />
                <circle cx="19" cy="19" r="2" fill="#fff" />
              </svg>
              <span className="mt-[5px]">多段</span>
            </button>
          </div>
        </Panel>
        <div className="flex-1 bg-[#e5f0d8]" />
      </div>
      <div className="flex h-[22px] items-center border-t border-[#cfcfcf] bg-[#e4efd7] pl-[6px] whitespace-nowrap text-black">
        <span className="w-[84px]">修改 | 放置 轴网</span>
        <label htmlFor="offset" className="flex h-[14px] items-center border-l border-[#999] pl-[9px]">
          偏移:
        </label>
        <input
          id="offset"
          defaultValue="0.0"
          className="ml-1 h-[18px] w-[91px] border-t border-l border-[#8a8a8a] bg-white pl-[2px] text-[#1c4f82]"
        />
      </div>
      <div className="flex h-[14px] pl-[2px]">
        <span className="w-[165px] bg-[#ececec] pl-1">属性</span>
        <span className="ml-[6px] w-[92px] text-[#555]">◯ {"{三维}"}</span>
        <span className="w-[97px] bg-white pl-1">▱ 标高 2</span>
      </div>
    </div>
  );
}

/* ---------------- Page ---------------- */

function Caption({ children, className = "" }: { children: React.ReactNode; className?: string }) {
  return <figcaption className={`text-center text-[22px] leading-9 ${className}`}>{children}</figcaption>;
}

export default function App() {
  return (
    <main className="bg-white pt-[161px] pr-[11%] pb-[110px] pl-[12%] font-['Liberation_Serif','Noto_Sans_CJK_SC',serif] text-[25px] font-light text-black [text-spacing-trim:space-all]" lang="zh-CN">
      <figure className="flex flex-col items-center pl-[18px] font-normal">
        <Dialog />
        <Caption className="mt-[19px] font-light">图&thinsp;2-5&nbsp; 项目基点的可见性</Caption>
      </figure>
      <h2 className="mt-[5px] indent-[50px] leading-[45px]">（5）轴网建立</h2>
      <p className="mt-px indent-[50px] leading-[43px]">
        调取项目基点后，通过拾取轴网创建项目中的水平和垂直轴网。通过匹配项目中的基点来进行设置（如图&thinsp;2-6&thinsp;所示）。
      </p>
      <figure className="mt-2 flex flex-col items-center pl-[18px]">
        <FloorPlan />
        <Caption className="mt-[30px]">图&thinsp;2-6&nbsp; 项目基点与轴网交点的重合</Caption>
      </figure>
      <p className="mt-[6px] indent-[50px] leading-[50px]">
        由于项目中的轴网较多，可以通过拾取命令来绘制项目。通过拾取命令的方法的好处是能减小轴网与原有图纸的偏差（如图&thinsp;2-7&thinsp;所示）。
      </p>
      <figure className="mt-[6px] flex flex-col items-center pl-[18px] font-normal">
        <Ribbon />
        <Caption className="mt-[17px] font-light">图&thinsp;2-7&nbsp; 轴网的拾取</Caption>
      </figure>
      <footer className="mt-[47px] pr-[173px] text-center text-[18px] leading-7">5</footer>
    </main>
  );
}
